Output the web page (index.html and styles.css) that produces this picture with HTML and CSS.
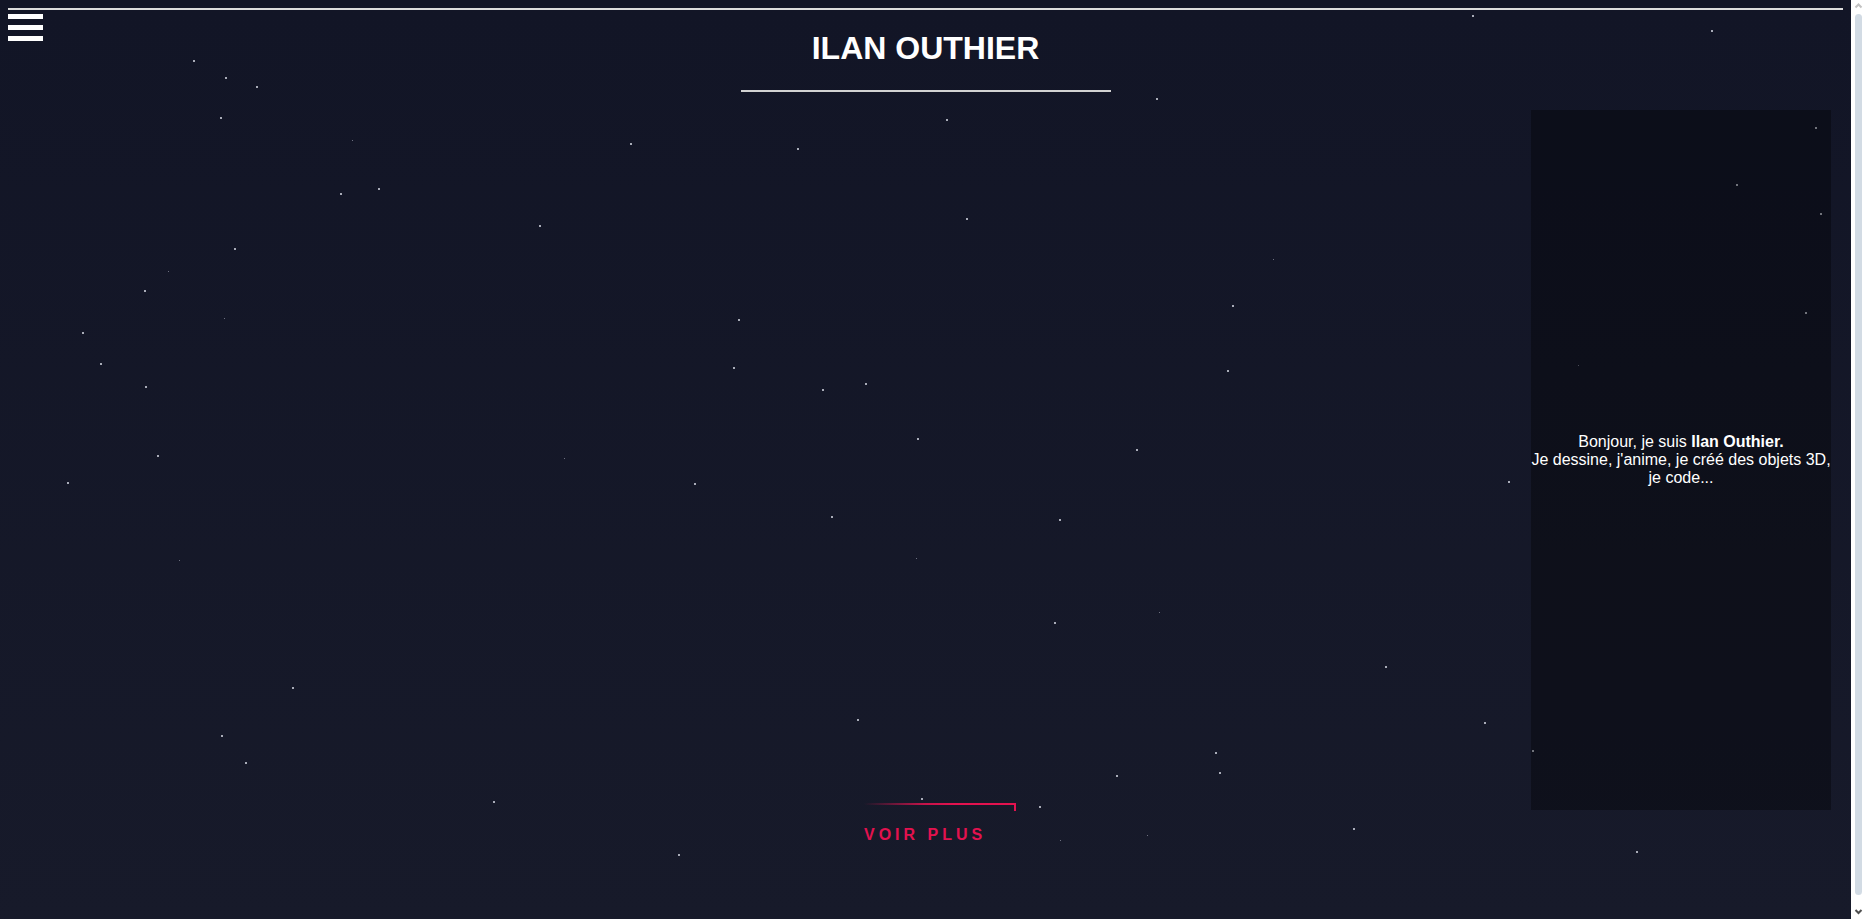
FILE: index.html
```
<!DOCTYPE html>
<html lang="fr">
<head>
<meta charset="utf-8">
<title>Ilan Outhier</title>
<link rel="stylesheet" href="styles.css">
</head>
<body>
<svg class="stars" width="1851" height="928" viewBox="0 0 1851 928" aria-hidden="true">
  <g class="star">
    <rect x="193" y="60" width="2" height="2"/><rect x="225" y="77" width="2" height="2"/>
    <rect x="256" y="86" width="2" height="2"/><rect x="220" y="117" width="2" height="2"/>
    <rect x="630" y="143" width="2" height="2"/><rect x="797" y="148" width="2" height="2"/>
    <rect x="946" y="119" width="2" height="2"/><rect x="1156" y="98" width="2" height="2"/>
    <rect x="1472" y="15" width="2" height="2"/><rect x="1711" y="30" width="2" height="2"/>
    <rect x="1815" y="127" width="2" height="2"/><rect x="340" y="193" width="2" height="2"/>
    <rect x="378" y="188" width="2" height="2"/><rect x="539" y="225" width="2" height="2"/>
    <rect x="966" y="218" width="2" height="2"/><rect x="1736" y="184" width="2" height="2"/>
    <rect x="1820" y="213" width="2" height="2"/><rect x="234" y="248" width="2" height="2"/>
    <rect x="144" y="290" width="2" height="2"/><rect x="1232" y="305" width="2" height="2"/>
    <rect x="1805" y="312" width="2" height="2"/><rect x="738" y="319" width="2" height="2"/>
    <rect x="82" y="332" width="2" height="2"/><rect x="100" y="363" width="2" height="2"/>
    <rect x="733" y="367" width="2" height="2"/><rect x="1227" y="370" width="2" height="2"/>
    <rect x="145" y="386" width="2" height="2"/><rect x="822" y="389" width="2" height="2"/>
    <rect x="865" y="383" width="2" height="2"/><rect x="917" y="438" width="2" height="2"/>
    <rect x="1136" y="449" width="2" height="2"/><rect x="157" y="455" width="2" height="2"/>
    <rect x="67" y="482" width="2" height="2"/><rect x="694" y="483" width="2" height="2"/>
    <rect x="1508" y="481" width="2" height="2"/><rect x="831" y="516" width="2" height="2"/>
    <rect x="1059" y="519" width="2" height="2"/><rect x="1054" y="622" width="2" height="2"/>
    <rect x="292" y="687" width="2" height="2"/><rect x="1385" y="666" width="2" height="2"/>
    <rect x="857" y="719" width="2" height="2"/><rect x="1484" y="722" width="2" height="2"/>
    <rect x="221" y="735" width="2" height="2"/><rect x="245" y="762" width="2" height="2"/>
    <rect x="1215" y="752" width="2" height="2"/><rect x="1532" y="750" width="2" height="2"/>
    <rect x="1116" y="775" width="2" height="2"/><rect x="1219" y="772" width="2" height="2"/>
    <rect x="921" y="798" width="2" height="2"/><rect x="1039" y="806" width="2" height="2"/>
    <rect x="493" y="801" width="2" height="2"/><rect x="1353" y="828" width="2" height="2"/>
    <rect x="678" y="854" width="2" height="2"/><rect x="1636" y="851" width="2" height="2"/>
  </g>
  <g class="star faint">
    <rect x="352" y="140" width="1" height="1"/><rect x="168" y="271" width="1" height="1"/>
    <rect x="1273" y="259" width="1" height="1"/><rect x="224" y="318" width="1" height="1"/>
    <rect x="1578" y="365" width="1" height="1"/><rect x="564" y="458" width="1" height="1"/>
    <rect x="179" y="560" width="1" height="1"/><rect x="916" y="558" width="1" height="1"/>
    <rect x="1159" y="612" width="1" height="1"/><rect x="1060" y="840" width="1" height="1"/>
    <rect x="1147" y="835" width="1" height="1"/>
  </g>
</svg>

<button class="menu-btn" type="button" aria-label="Menu">
  <span class="menu-bar"></span>
  <span class="menu-bar"></span>
  <span class="menu-bar"></span>
</button>

<header class="site-header">
  <h1 class="site-title">ILAN OUTHIER</h1>
  <div class="title-rule"></div>
</header>

<main class="hero">
  <aside class="intro">
    <p class="intro-text">Bonjour, je suis <strong>Ilan Outhier.</strong><br>Je dessine, j'anime, je créé des objets 3D, je code...</p>
  </aside>
  <a class="more" href="#">
    <span class="more-line"></span>
    <span class="more-label">VOIR PLUS</span>
  </a>
</main>

<div class="scrollbar" aria-hidden="true">
  <svg class="sb-arrow sb-up" width="15" height="14" viewBox="0 0 15 14"><polyline points="4.5,7.5 7.5,4.5 10.5,7.5" fill="none" stroke="#c2c2c2" stroke-width="2"/></svg>
  <span class="sb-thumb"></span>
  <svg class="sb-arrow sb-down" width="15" height="15" viewBox="0 0 15 15"><polyline points="4.5,6 7.5,9 10.5,6" fill="none" stroke="#505050" stroke-width="2"/></svg>
</div>
</body>
</html>
```

FILE: styles.css
```
html {
  background: linear-gradient(#121526, #171a2a);
  min-height: 100%;
}

body {
  margin: 8px 23px 8px 8px;
  font-family: "Liberation Sans", Arial, sans-serif;
  color: #ffffff;
  background: linear-gradient(#121526, #171a2a);
}

.stars {
  position: absolute;
  top: 0;
  left: 0;
  z-index: 0;
  pointer-events: none;
}

.star rect {
  fill: #a9acb8;
}

.star.faint rect {
  fill: #6d7080;
}

.menu-btn {
  position: fixed;
  top: 14px;
  left: 8px;
  z-index: 3;
  display: flex;
  flex-direction: column;
  gap: 6px;
  padding: 0;
  margin: 0;
  border: 0;
  background: none;
  cursor: pointer;
}

.menu-bar {
  display: block;
  width: 35px;
  height: 5px;
  background: #ffffff;
}

.site-header {
  position: relative;
  z-index: 1;
  border-top: 2px solid #dcdcdc;
  display: flex;
  flex-direction: column;
  align-items: center;
}

.site-title {
  margin: 20px 0 0;
  font-size: 32px;
  line-height: 37px;
  font-weight: bold;
}

.title-rule {
  width: 370px;
  height: 2px;
  margin-top: 23px;
  background: #d2d2d2;
}

.hero {
  position: relative;
  z-index: 1;
  display: grid;
  grid-template-columns: 1fr;
  grid-template-rows: 734px;
  padding: 18px 0 76px;
}

.intro {
  grid-area: 1 / 1;
  justify-self: end;
  align-self: start;
  width: 300px;
  height: 700px;
  margin-right: 12px;
  background: rgba(0, 0, 0, 0.33);
  display: flex;
  align-items: center;
  justify-content: center;
  text-align: center;
}

.intro-text {
  margin: 0;
  font-size: 16px;
}

.more {
  grid-area: 1 / 1;
  justify-self: center;
  align-self: end;
  display: flex;
  flex-direction: column;
  align-items: flex-start;
  text-decoration: none;
  color: #e3124f;
}

.more-line {
  display: block;
  width: 150px;
  height: 8px;
  margin: 0 -29px 15px 0;
  border-right: 2px solid #e3124f;
  background: linear-gradient(to right, rgba(227, 18, 79, 0) 0%, rgba(227, 18, 79, 0.85) 40%, #e3124f 60%) top left / 100% 2px no-repeat;
}

.more-label {
  font-size: 16px;
  font-weight: bold;
  letter-spacing: 4px;
  line-height: 18px;
}

.scrollbar {
  position: fixed;
  top: 0;
  right: 0;
  z-index: 5;
  width: 15px;
  height: 100vh;
  background: #ffffff;
  display: flex;
  flex-direction: column;
  align-items: center;
}

.sb-arrow {
  display: block;
  flex: none;
}

.sb-thumb {
  flex: 1;
  width: 7px;
  margin-bottom: 9px;
  border-radius: 4px;
  background: #d2dbe4;
}
```
